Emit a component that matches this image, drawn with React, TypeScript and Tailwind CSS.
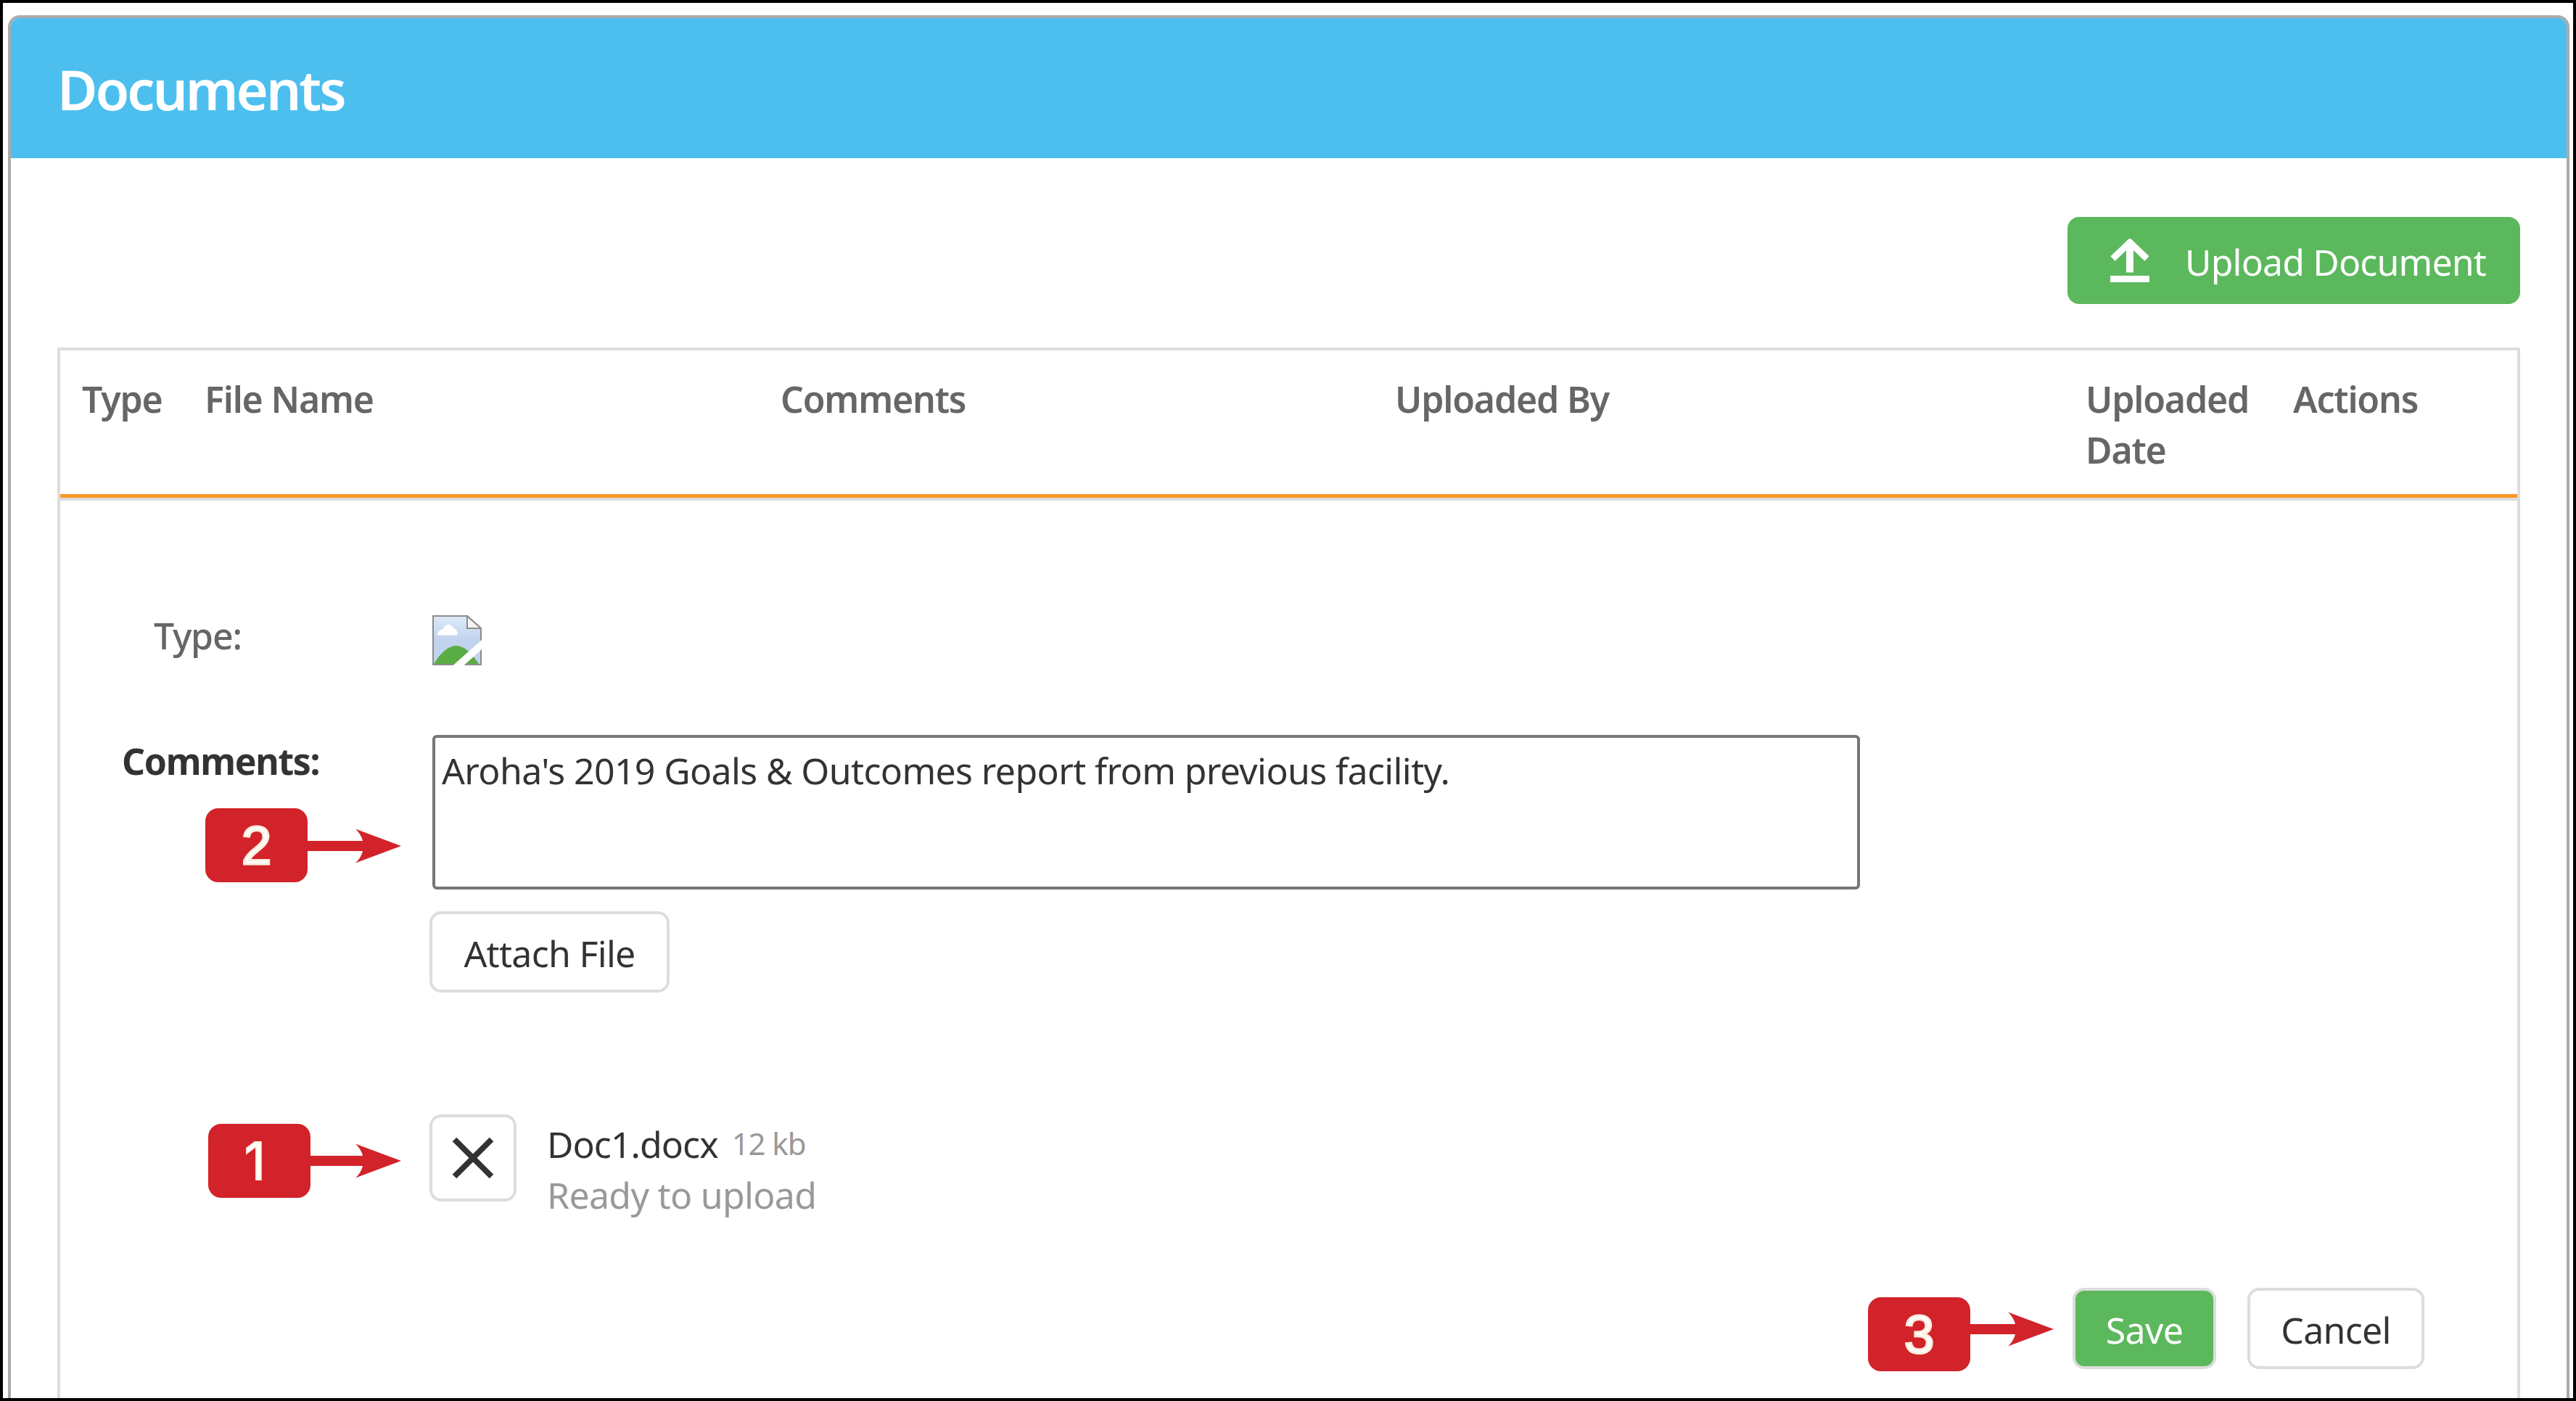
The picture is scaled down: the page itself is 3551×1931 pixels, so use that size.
import { ReactNode } from "react"

const columns = ["Type", "File Name", "Comments", "Uploaded By", "Uploaded Date", "Actions"]

const UploadIcon = () => (
    <svg width="54" height="60" viewBox="0 0 54 60" fill="none" stroke="white">
        <path d="M27 46.5V8" strokeWidth="10" />
        <path d="M3.5 27.5L27 5L50.5 27.5" strokeWidth="9" />
        <path d="M0 55.5H54" strokeWidth="9" />
    </svg>
)

const BrokenImage = () => (
    <svg width="68" height="69" viewBox="0 0 68 69" className="mt-2">
        <defs>
            <linearGradient id="sky" x1="0" y1="0" x2="0" y2="1">
                <stop offset="0" stopColor="#dce9f8" />
                <stop offset="0.5" stopColor="#c2d3ee" />
                <stop offset="1" stopColor="#c2d3ee" />
            </linearGradient>
        </defs>
        <path d="M1 1H48L67 18V68H1Z" fill="url(#sky)" stroke="#8c8c8c" strokeWidth="2" />
        <path d="M48 1V18H67Z" fill="#f4f4f4" stroke="#8c8c8c" strokeWidth="2" />
        <path d="M7 27.5C7 22 11 20 15 19C17 11 27 11 29 18C33 18 36 24 34 27.5Z" fill="white" />
        <path d="M2 67C12 51 22 42 33 42C44 42 55 53 64 67Z" fill="#5aad45" />
        <path d="M69 33L28 69.5H43L69 46Z" fill="white" />
    </svg>
)

const Button = ({ className, children }: { className: string, children: ReactNode }) => (
    <button className={`flex h-[112px] items-center justify-center rounded-2xl border-4 border-[#ddd] pt-1 tracking-[-0.7px] ${className}`}>
        {children}
    </button>
)

// numbered marker with the arrow that points at a control
const Marker = ({ step, className, digit, arrow }: { step: number, className: string, digit: string, arrow: string }) => (
    <div className={`absolute flex h-[102px] w-[141px] items-center justify-center rounded-[18px] bg-[#d2232a] ${className}`}>
        <span className={`leading-[102px] text-white ${digit}`}>{step}</span>
        <svg width="132" height="48" viewBox="0 0 132 48" fill="#d2232a" className={`absolute left-[139px] ${arrow}`}>
            <path d="M0 17H78Q76 8 68 0.5L131 24L68 47.5Q76 40 78 31H0Z" />
        </svg>
    </div>
)

export default function App() {
    return (
        <div className="relative h-[1931px] w-[3551px] overflow-hidden border-4 border-black bg-white pt-[17px] pr-[5px] pl-[7px] font-['Noto_Sans','Open_Sans',sans-serif] text-[50px] leading-[70px] text-[#333]">
            <div className="h-[1920px] overflow-hidden rounded-t-2xl border-4 border-[#ababab]">
                <header className="flex h-[193px] items-center bg-[#4cbfef] pt-0.5 pl-16">
                    <h1 className="text-[76px] font-semibold tracking-[-3.1px] text-white">Documents</h1>
                </header>

                <main className="px-16 pt-[81px]">
                    <div className="flex justify-end">
                        <button className="flex h-[120px] w-[624px] items-center gap-[49px] rounded-2xl bg-[#5cb85c] pl-[59px] text-white">
                            <UploadIcon />
                            <span className="pt-1 tracking-[-0.85px]">Upload Document</span>
                        </button>
                    </div>

                    <section className="mt-[60px] h-[1500px] border-4 border-[#ddd]">
                        <div className="border-b-4 border-[#ddd]">
                            <div className="grid h-[203px] grid-cols-[169px_794px_847px_952px_286px_1fr] border-b-[5px] border-[#f99627] pt-8 pl-[30px] font-semibold tracking-[-1.2px] text-[#666]">
                                {columns.map(name => <div key={name} className="pr-10">{name}</div>)}
                            </div>
                        </div>

                        <form className="pt-[150px]">
                            <div className="flex h-[173px]">
                                <span className="w-[513px] pt-px pl-[129px] font-medium tracking-[-1.2px] text-[#666]">Type:</span>
                                <BrokenImage />
                            </div>
                            <div className="flex">
                                <label className="w-[513px] pt-px pl-[85px] font-bold tracking-[-1.3px]">Comments:</label>
                                <textarea
                                    className="h-[213px] w-[1968px] resize-none rounded-md border-4 border-[#767676] px-[9px] py-2.5 tracking-[-0.63px]"
                                    defaultValue="Aroha's 2019 Goals & Outcomes report from previous facility."
                                />
                            </div>
                            <div className="mt-[30px] pl-[509px]">
                                <Button className="w-[331px]">Attach File</Button>
                                <div className="mt-[168px] flex h-[140px]">
                                    <button className="flex size-[120px] items-center justify-center rounded-2xl border-4 border-[#ddd]">
                                        <svg width="58" height="58" viewBox="0 0 58 58" stroke="#333" strokeWidth="8">
                                            <path d="M3.5 3.5L54.5 54.5M54.5 3.5L3.5 54.5" />
                                        </svg>
                                    </button>
                                    <div className="mt-1.5 ml-[42px]">
                                        <p className="tracking-[-0.95px]">
                                            Doc1.docx
                                            <span className="ml-[19px] align-[4px] text-[42px] leading-none tracking-[-1.1px] text-[#999]">12 kb</span>
                                        </p>
                                        <p className="tracking-[-0.68px] text-[#999]">Ready to upload</p>
                                    </div>
                                </div>
                            </div>
                            <div className="mt-[99px] flex justify-end gap-[43px] pr-32">
                                <Button className="w-[198px] bg-[#5cb85c] text-white">Save</Button>
                                <Button className="w-[244px]">Cancel</Button>
                            </div>
                        </form>
                    </section>
                </main>
            </div>

            <Marker step={2} className="top-[1110px] left-[279px]" digit="font-['Liberation_Sans'] text-[75px] [-webkit-text-stroke:3px_#fbeee0]" arrow="top-[28px]" />
            <Marker step={1} className="top-[1545px] left-[283px]" digit="pr-3 font-[Inter] text-[72px] [-webkit-text-stroke:2px_#fbeee0]" arrow="top-[27px] -ml-1" />
            <Marker step={3} className="top-[1784px] left-[2571px]" digit="font-['Liberation_Sans'] text-[75px] [-webkit-text-stroke:3px_#fbeee0]" arrow="top-[20px] -ml-[14px]" />
        </div>
    )
}
